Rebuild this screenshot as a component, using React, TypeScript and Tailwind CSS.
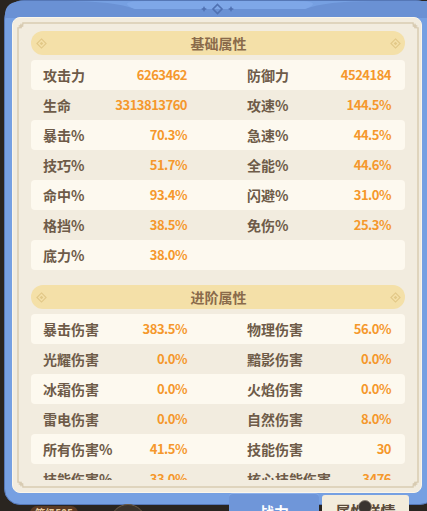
import React from 'react'

const BASIC: string[][] = [
  ['攻击力', '6263462', '防御力', '4524184'],
  ['生命', '3313813760', '攻速%', '144.5%'],
  ['暴击%', '70.3%', '急速%', '44.5%'],
  ['技巧%', '51.7%', '全能%', '44.6%'],
  ['命中%', '93.4%', '闪避%', '31.0%'],
  ['格挡%', '38.5%', '免伤%', '25.3%'],
  ['底力%', '38.0%'],
]

const ADVANCED: string[][] = [
  ['暴击伤害', '383.5%', '物理伤害', '56.0%'],
  ['光耀伤害', '0.0%', '黯影伤害', '0.0%'],
  ['冰霜伤害', '0.0%', '火焰伤害', '0.0%'],
  ['雷电伤害', '0.0%', '自然伤害', '8.0%'],
  ['所有伤害%', '41.5%', '技能伤害', '30'],
  ['技能伤害%', '33.0%', '核心技能伤害', '3476'],
]

const font = { fontFamily: '"Noto Sans CJK SC", "Noto Sans", sans-serif' }

function Diamond() {
  return (
    <svg viewBox="0 0 12 12" className="w-[11px] h-[11px]">
      <path d="M6 1 L11 6 L6 11 L1 6 Z" fill="none" stroke="#e2c887" strokeWidth={1.2} />
      <path d="M6 4 L8 6 L6 8 L4 6 Z" fill="#e2c887" />
    </svg>
  )
}

function SectionHeader({ title }: { title: string }) {
  return (
    <div className="h-[24px] rounded-full bg-[#f4e0a8] flex items-center justify-between pl-[5px] pr-[4px]">
      <Diamond />
      <span className="text-[14px] font-bold text-[#8a6b4b] leading-none">{title}</span>
      <Diamond />
    </div>
  )
}

function Cell({ label, value }: { label?: string; value?: string }) {
  return (
    <div className="flex items-center justify-between">
      <span className="text-[14px] font-semibold text-[#6e5b48]">{label}</span>
      <span className="text-[13px] font-bold tracking-[-0.5px] text-[#f5982c]">{value}</span>
    </div>
  )
}

function StatRows({ rows }: { rows: string[][] }) {
  return (
    <div className="mt-[5px]">
      {rows.map((r, i) => (
        <div
          key={r[0]}
          className={`h-[30px] rounded-[4px] grid grid-cols-[144px_144px] gap-x-[60px] items-center pl-3 pr-[14px] ${i % 2 === 0 ? 'bg-[#fdf9ef]' : ''}`}
        >
          <Cell label={r[0]} value={r[1]} />
          <Cell label={r[2]} value={r[3]} />
        </div>
      ))}
    </div>
  )
}

function Star({ x, y }: { x: number; y: number }) {
  return <path d={`M${x} ${y - 3} L${x + 1} ${y - 1} L${x + 3} ${y} L${x + 1} ${y + 1} L${x} ${y + 3} L${x - 1} ${y + 1} L${x - 3} ${y} L${x - 1} ${y - 1} Z`} fill="#d8cbb2" />
}

export default function App() {
  return (
    <div className="relative w-[427px] h-[511px] overflow-hidden bg-[#2a2520]" style={font}>
      {/* blue frame */}
      <div className="relative ml-[4px] w-[432px] h-[505px] rounded-t-[20px] rounded-b-[16px] bg-[#76a0e2] border border-[#5577b6] pt-[16px] pl-[7px]">
        <svg className="absolute left-0 top-0" width="432" height="17" viewBox="0 0 432 17">
          <path d="M0 17 L0 14 Q0 0 18 0 L60 0 Q110 0 130 8 L300 8 Q320 0 370 0 L432 0 L432 17 Z" fill="#6a91d4" />
          <path d="M130 8 L300 8 Q320 0 290 0 L140 0 Q110 0 130 8 Z" fill="#7ea7e8" />
          <path d="M199 5 L200 7 L202 8 L200 9 L199 11 L198 9 L196 8 L198 7 Z" fill="#5071b2" />
          <path d="M226 5 L227 7 L229 8 L227 9 L226 11 L225 9 L223 8 L225 7 Z" fill="#5071b2" />
          <path d="M212.5 3.5 L217 8 L212.5 12.5 L208 8 Z" fill="none" stroke="#5071b2" strokeWidth={1.6} />
        </svg>

        {/* cream panel */}
        <div className="relative w-[410px] h-[476px] rounded-[8px] bg-[#f2ecdf] border border-[#fbf6ea]">
          <svg className="absolute left-0 top-0 pointer-events-none" width="410" height="476" viewBox="0 0 410 476">
            <path
              d="M10 5 H400 A5 5 0 0 0 405 10 V464 A5 5 0 0 0 400 469 H10 A5 5 0 0 0 5 464 V10 A5 5 0 0 0 10 5 Z"
              fill="none"
              stroke="#d9ccb3"
              strokeWidth={1.5}
            />
            <Star x={8} y={8} />
            <Star x={402} y={8} />
            <Star x={8} y={466} />
            <Star x={402} y={466} />
          </svg>

          <div className="relative mt-[7px] h-[455px] overflow-hidden pt-[6px] pl-[18px] pr-[16px]">
            <SectionHeader title="基础属性" />
            <StatRows rows={BASIC} />
            <div className="mt-[15px]">
              <SectionHeader title="进阶属性" />
            </div>
            <StatRows rows={ADVANCED} />
          </div>
        </div>
      </div>

      {/* bottom tabs, partly hidden below the window */}
      <div className="absolute left-[229px] top-[493px] w-[90px] h-[30px] rounded-t-[4px] bg-[#6f96d9] border-t border-[#8db0ea] flex justify-center pt-[10px]">
        <span className="text-[15px] font-bold text-white leading-none">战力</span>
      </div>
      <div className="absolute left-[322px] top-[495px] w-[87px] h-[30px] rounded-t-[3px] bg-[#f3ecdc] flex justify-center pt-[8px]">
        <span className="text-[15px] font-semibold text-[#5b4a3a] leading-none">属性详情</span>
        <span className="absolute left-[36px] top-[5px] w-[14px] h-[14px] rounded-full bg-[#3a3430] border border-[#8a8076]" />
      </div>
      <div className="absolute left-[30px] top-[506px] w-[48px] h-[14px] rounded-full bg-[#5a3a24] flex justify-center">
        <span className="text-[10px] font-bold text-[#e6c79a] leading-[14px]">等级505</span>
      </div>
      <div className="absolute left-[110px] top-[504px] w-[36px] h-[36px] rounded-full bg-[#3b332b] border border-[#6b5a45]" />
    </div>
  )
}
